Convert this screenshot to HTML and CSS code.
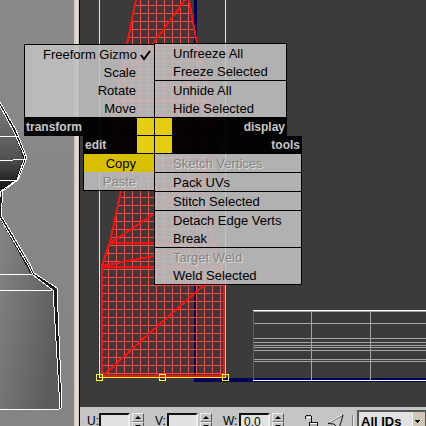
FILE: index.html
```html
<!DOCTYPE html>
<html lang="en">
<head>
<meta charset="utf-8">
<title>UVW editor</title>
<link rel="stylesheet" href="styles.css">
</head>
<body>
<main class="workspace">
  <section class="viewport" aria-label="Perspective viewport">
    <svg class="scene" shape-rendering="crispEdges" aria-hidden="true">
      <defs>
        <linearGradient id="bg" x1="0" y1="0" x2="0" y2="1"><stop offset="0" stop-color="#8a8a8a"/><stop offset="1" stop-color="#848484"/></linearGradient>
        <linearGradient id="body" x1="0" y1="0" x2="1" y2=".5"><stop offset="0" stop-color="#858585"/><stop offset="1" stop-color="#5c5c5c"/></linearGradient>
        <linearGradient id="bulb" x1="0" y1="0" x2="0" y2="1"><stop offset="0" stop-color="#7c7c7c"/><stop offset=".6" stop-color="#555"/><stop offset="1" stop-color="#101010"/></linearGradient>
      </defs>
      <rect width="100%" height="100%" fill="url(#bg)"/>
      <path d="M0 102L16 130L27 158L18 179L3 191H0Z" fill="url(#bulb)"/>
      <path d="M0 216L28 265L33 274L53 290L60 409L0 410Z" fill="url(#body)"/>
      <path d="M0 104L15 131L25 158L17 179M2 192L0 216L32 273L55 289L61 408" fill="none" stroke="#1c1c1c" stroke-width="3"/>
      <path d="M0 102L16 130L27 158L18 180L3 191L1 215L30 264L34 273L57 288L62 407L60 409L0 410M0 106L14 132L25 157L17 180L1 191L0 197M0 218L28 265L33 275L53 290L60 409M0 136H18M0 161L26 159M0 181L17 180M0 275L33 274M0 291L53 290" fill="none" stroke="#fff"/>
    </svg>
  </section>
  <section class="editor">
    <div class="canvas">
      <svg class="scene" shape-rendering="crispEdges" aria-hidden="true">
        <defs>
          <pattern id="mesh" width="8" height="8" patternUnits="userSpaceOnUse"><path d="M4 0h1v8h-1zM0 5h8v1h-8z" fill="#ff4848"/></pattern>
          <clipPath id="shape"><path d="M136 0L127 44L118 85L113 110V128L120 170L121 191L110 242L101 266V376H225V285L222 266L214 242L203 191L207 165L212 128V108L207 80L197 44L189 0Z"/></clipPath>
        </defs>
        <g transform="translate(-80 0)">
          <path d="M194 0h3v378h229v4H194z" fill="#000054"/>
          <path d="M426 378h2000v4H426z" fill="#000054"/>
          <path d="M99 0h1v377h-1zM225 0h1v377h-1zM99 377h127v1H99z" fill="#ffff30"/>
          <rect x="100" width="126" height="377" fill="url(#mesh)" clip-path="url(#shape)"/>
          <path d="M136 0L127 44L118 85L113 110V128L120 170L121 191L110 242L102 266V376H224V285L222 266L214 242L203 191L207 165L212 128V108L207 80L197 44L189 0M185 0L153 44L118 85M116 100H211M113 128L211 104M116 146L211 122M110 243L154 214L207 165M110 243H215M102 266L154 256L214 242M102 267H222M104 375L142 340L204 285L222 266" fill="none" stroke="#ff1010" stroke-width="2"/>
          <path d="M172 145h10M162 155v10" stroke="#ffff30"/>
          <path d="M96.500 374.500h6v6h-6zM159.500 374.500h6v6h-6zM222.500 374.500h6v6h-6zM222.500 142.500h6v6h-6z" fill="none" stroke="#ffff30"/>
          <path d="M254 311.500h2000M254 323.500h2000M254 338.500h2000M254 342.500h2000M254 345.500h2000M254 347.500h2000M254 350.500h2000M254 359.500h2000M254 361.500h2000M311.500 311v69M370.500 311v69" fill="none" stroke="#a4a4a4"/>
          <path d="M253 310.500h2000M253 380.500h2000" stroke="#fff"/>
          <path d="M253.500 311v69" stroke="#d010e0"/>
        </g>
      </svg>
    </div>
    <form class="toolbar">
      <div class="field"><label for="u">U:</label><input id="u" type="text"><span class="spin"><button type="button" aria-label="Increase U"><i class="up"></i></button><button type="button" aria-label="Decrease U"><i class="down"></i></button></span></div>
      <div class="field"><label for="v">V:</label><input id="v" type="text"><span class="spin"><button type="button" aria-label="Increase V"><i class="up"></i></button><button type="button" aria-label="Decrease V"><i class="down"></i></button></span></div>
      <div class="field"><label for="w" class="wide">W:</label><input id="w" type="text" value="0.0"><span class="spin"><button type="button" aria-label="Increase W"><i class="up"></i></button><button type="button" aria-label="Decrease W"><i class="down"></i></button></span></div>
      <button class="tool lock" type="button" aria-label="Lock selection">
        <svg width="16" height="16" shape-rendering="crispEdges"><path d="M3.500 5V3.500H7.500V8" stroke="#fff" fill="none"/><path d="M1.500 5V2.500L2.500 1.500H6.500L7.500 2.500V8" stroke="#111" fill="none"/><path d="M5.500 8.500H13.500V15.500H5.500z" fill="#aaa" stroke="#111"/><path d="M6 9.500h7" stroke="#fff"/></svg>
      </button>
      <button class="tool filter" type="button" aria-label="Filter selected faces">
        <svg width="18" height="16"><path d="M16 1L1 9.500L7 10L12 15Z" fill="#c8c8c8" stroke="#111"/><path d="M15 1L2 8.500" stroke="#fff"/></svg>
      </button>
      <span class="rule"></span>
      <select class="ids" aria-label="Material IDs"><option>All IDs</option></select>
    </form>
  </section>
</main>
<nav class="quads" aria-label="Quad menu">
  <section class="quad top left">
    <ul>
      <li><button>Freeform Gizmo<svg class="check" width="12" height="12" aria-hidden="true"><path d="M1 5L4 9L10 1" fill="none" stroke="#000" stroke-width="2"/></svg></button></li>
      <li><button>Scale</button></li>
      <li><button>Rotate</button></li>
      <li><button>Move</button></li>
    </ul>
    <h2>transform</h2>
  </section>
  <section class="quad top right">
    <ul>
      <li><button>Unfreeze All</button></li>
      <li><button>Freeze Selected</button></li>
      <li class="split"><button>Unhide All</button></li>
      <li><button>Hide Selected</button></li>
    </ul>
    <h2>display</h2>
  </section>
  <section class="quad bottom left">
    <h2>edit</h2>
    <ul>
      <li><button class="active">Copy</button></li>
      <li><button disabled>Paste</button></li>
    </ul>
  </section>
  <section class="quad bottom right">
    <h2>tools</h2>
    <ul>
      <li><button disabled>Sketch Vertices</button></li>
      <li class="split"><button>Pack UVs</button></li>
      <li class="split"><button>Stitch Selected</button></li>
      <li class="split"><button>Detach Edge Verts</button></li>
      <li><button>Break</button></li>
      <li class="split"><button disabled>Target Weld</button></li>
      <li><button>Weld Selected</button></li>
    </ul>
  </section>
</nav>
</body>
</html>
```
FILE: styles.css
```css
* { box-sizing: border-box; }

body {
  margin: 0;
  overflow: hidden;
  font: 13px/18px "Liberation Sans", Arial, sans-serif;
  color: #000;
}

button, input, select { font: inherit; color: inherit; margin: 0; }

.workspace {
  display: grid;
  grid-template-columns: 80px 1fr;
  height: 100vh;
}

.viewport {
  display: flex;
  min-height: 0;
  border-right: 1px solid #000;
  background: linear-gradient(90deg, #d8cebf 2px, #e2ddd8 2px 4px, #d0c5b6 4px) right / 5px 100% no-repeat;
  padding-right: 5px;
}

.scene { display: block; width: 100%; height: 100%; }

.editor {
  display: flex;
  flex-direction: column;
  min-width: 0;
  min-height: 0;
  background: #3b3b3b;
}

.canvas { flex: 1; min-height: 0; overflow: hidden; }

/* Toolbar along the lower edge, cut off by the window */
.toolbar {
  display: flex;
  align-items: flex-start;
  flex: 0 0 19px;
  overflow: hidden;
  padding: 0 0 0 7px;
  background: #c5c5c5;
}

.field {
  display: flex;
  flex: none;
  margin: 6px 11px 0 0;
  font-size: 12px;
}

.field label { width: 12px; line-height: 16px; }
.field label.wide { width: 16px; }

.field input {
  width: 31px;
  height: 18px;
  padding: 0 3px;
  border: 2px solid;
  border-color: #111 #eee #eee #111;
  background: #e1e1e1;
}

.spin { display: flex; flex-direction: column; margin-left: 2px; }

.spin button {
  display: grid;
  place-items: center;
  width: 12px;
  height: 9px;
  padding: 0;
  border: 1px solid;
  border-color: #eee #555 #777 #eee;
  background: #c5c5c5;
}

.up, .down { border: 3px solid transparent; }
.up { border-top: 0; border-bottom-color: #000; }
.down { border-bottom: 0; border-top-color: #000; }

.tool { flex: none; padding: 0; border: 0; background: none; }
.tool svg { display: block; }
.lock { margin: 7px 7px 0 9px; }
.filter { margin: 7px 7px 0 0; }

.rule {
  flex: none;
  width: 2px;
  height: 20px;
  margin: 8px 3px 0 0;
  background: #808080;
  border-right: 1px solid #e8e8e8;
}

.ids {
  flex: none;
  width: 69px;
  height: 24px;
  margin-top: 3px;
  padding: 0 0 0 2px;
  appearance: none;
  border: 2px solid #50585c;
  border-right-width: 1px;
  border-radius: 0;
  background:
    linear-gradient(#000, #000) right 5px top 8px / 5px 1px no-repeat,
    linear-gradient(#000, #000) right 6px top 9px / 3px 1px no-repeat,
    linear-gradient(#000, #000) right 7px top 10px / 1px 1px no-repeat,
    linear-gradient(90deg, #f4f0e8 1px, #d0c8b4 1px) right / 13px 100% no-repeat,
    #e1e1e1;
  font-weight: bold;
}

/* Quad menu floating over the editor */
.quads {
  position: absolute;
  top: 43px;
  left: 24px;
  display: grid;
  grid-template-columns: 130px auto;
}

.quad { border: 0 solid #000; }
.quad.top { align-self: end; border-top-width: 1px; }
.quad.bottom { align-self: start; border-bottom-width: 1px; }
.quad.left { border-left-width: 1px; text-align: right; }
.quad.right { border-width: 1px; }
.quad.top.right { border-bottom: 0; justify-self: start; width: 133px; }
.quad.bottom.right { border-top: 0; width: 148px; }
.quad.bottom.left { justify-self: end; width: 71px; }

.quad ul {
  margin: 0;
  padding: 0;
  list-style: none;
  background: rgba(192, 192, 192, .89);
}

.split { border-top: 1px solid #000; }

.quad button {
  display: block;
  width: 100%;
  height: 18px;
  padding: 1px 18px 0;
  border: 0;
  background: none;
  text-align: inherit;
  line-height: 18px;
  white-space: nowrap;
}

.quad.left button { position: relative; }
.quad button.active { background: #d8c000; }
.quad button:disabled { color: #858585; text-shadow: 1px 1px #dcdcdc; }

.check { position: absolute; top: 5px; right: 2px; }

.quad h2 {
  display: flex;
  align-items: center;
  justify-content: space-between;
  height: 18px;
  margin: 0;
  padding: 0 1px;
  background: rgba(0, 0, 0, .95);
  color: #c8c8c8;
  font-size: 12px;
  line-height: 18px;
}

.quad.top h2 { border-bottom: 1px solid #000; height: 19px; border-top: 1px solid #000; }
.quad.bottom h2 { border-bottom: 1px solid #000; }
.quad.left h2 { padding-right: 0; }
.quad.right h2 { padding-left: 0; }

.quad h2::before, .quad h2::after { background: #e6cd14; height: 17px; width: 17px; }
.quad.left h2::after { content: ""; }
.quad.right h2::before { content: ""; }
```
